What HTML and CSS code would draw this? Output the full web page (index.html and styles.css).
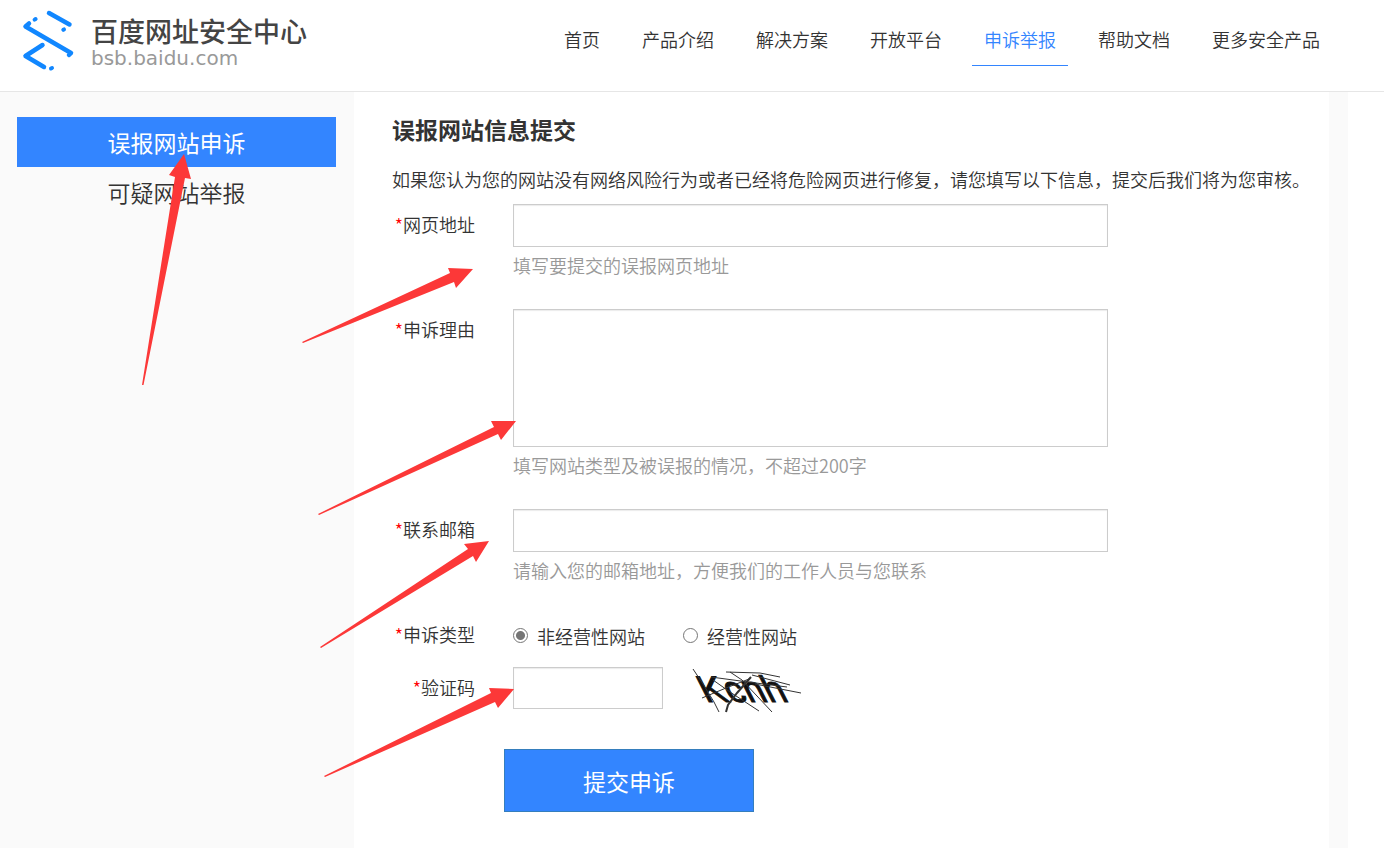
FILE: index.html
```html
<!DOCTYPE html>
<html lang="zh-CN">
<head>
<meta charset="utf-8">
<title>百度网址安全中心</title>
<link rel="stylesheet" href="styles.css">
</head>
<body>
<header class="header">
  <a class="logo" href="#">
    <svg class="logo-mark" width="56" height="64" viewBox="20 8 56 64" fill="none" stroke="#1187ff" stroke-width="4.500" stroke-linecap="round" stroke-linejoin="round" aria-hidden="true">
      <path d="M49 13 69.500 24.500"/>
      <path d="M63.300 29.800 64 29.400M34.600 19.600 35.600 19M51 68.500 52 68" stroke-width="4"/>
      <path d="M29 23.500 25.500 26.500 71 53 69 55"/>
      <path d="M42.500 45 25.500 56 44 67"/>
    </svg>
    <span class="logo-text">
      <span class="logo-name">百度网址安全中心</span>
      <span class="logo-domain">bsb.baidu.com</span>
    </span>
  </a>
  <nav class="nav">
    <a href="#">首页</a>
    <a href="#">产品介绍</a>
    <a href="#">解决方案</a>
    <a href="#">开放平台</a>
    <a class="active" href="#">申诉举报</a>
    <a href="#">帮助文档</a>
    <a href="#">更多安全产品</a>
  </nav>
</header>
<div class="page">
  <aside class="sidebar">
    <a class="active" href="#">误报网站申诉</a>
    <a href="#">可疑网站举报</a>
  </aside>
  <main class="content">
    <h1>误报网站信息提交</h1>
    <p class="intro">如果您认为您的网站没有网络风险行为或者已经将危险网页进行修复，请您填写以下信息，提交后我们将为您审核。</p>
    <form>
      <div class="row">
        <label for="url"><i>*</i>网页地址</label>
        <div class="field">
          <input class="box" id="url" type="text">
          <p class="hint">填写要提交的误报网页地址</p>
        </div>
      </div>
      <div class="row">
        <label for="reason"><i>*</i>申诉理由</label>
        <div class="field">
          <textarea class="box" id="reason"></textarea>
          <p class="hint">填写网站类型及被误报的情况，不超过200字</p>
        </div>
      </div>
      <div class="row">
        <label for="email"><i>*</i>联系邮箱</label>
        <div class="field">
          <input class="box" id="email" type="email">
          <p class="hint">请输入您的邮箱地址，方便我们的工作人员与您联系</p>
        </div>
      </div>
      <div class="row compact" role="radiogroup" aria-labelledby="kind">
        <span class="label" id="kind"><i>*</i>申诉类型</span>
        <div class="choices">
          <label><input type="radio" name="kind" checked>非经营性网站</label>
          <label><input type="radio" name="kind">经营性网站</label>
        </div>
      </div>
      <div class="row compact">
        <label for="code"><i>*</i>验证码</label>
        <div class="captcha">
          <input class="box" id="code" type="text">
          <svg width="120" height="46" viewBox="690 667 120 46" role="img" aria-label="验证码图片">
            <text class="captcha-text" transform="translate(706 702) skewX(27)">Kcnh</text>
            <g fill="none" stroke="#333" stroke-width="1">
              <path d="M693 669 703 684 714 702 719 712M711 677 748 682 787 687"/>
              <path d="M726 672 760 673 780 677M730 672 742 680 772 712"/>
              <path d="M702 698 726 688 749 679M713 680 730 692 759 711"/>
              <path d="M751 677 737 693 728 705 726 712" stroke-width="2"/>
              <path d="M752 675 790 685M755 684 801 693"/>
            </g>
          </svg>
        </div>
      </div>
      <button class="submit" type="submit">提交申诉</button>
    </form>
  </main>
</div>
<svg class="arrows" width="1384" height="848" viewBox="0 0 1384 848" fill="#fc3838" aria-hidden="true">
  <path d="M184 154 191 179 185 178 143.500 385 142 385 175 177 169 175Z"/>
  <path d="M473 269 456 288 454 282 303 343 302 342 450 273 448 268Z"/>
  <path d="M516 421 501 440 498 434 319 515 318 514 494 427 491 421Z"/>
  <path d="M489 541 476 562 473 556 321 648 320 647 468 549 464 544Z"/>
  <path d="M514 689 498 708 495 702 325 777 324 776 491 693 489 688Z"/>
</svg>
</body>
</html>
```
FILE: styles.css
```css
* {
  box-sizing: border-box;
}

body {
  position: relative;
  margin: 0;
  min-height: 100vh;
  display: flex;
  flex-direction: column;
  overflow-x: hidden;
  background: #fff;
  color: #333;
  font-family: "Noto Sans CJK SC", sans-serif;
  font-size: 18px;
  font-weight: 350;
}

a {
  color: inherit;
  text-decoration: none;
}

.header {
  height: 92px;
  flex: none;
  display: flex;
  justify-content: space-between;
  padding: 0 52px 0 20px;
  border-bottom: 1px solid #e6e6e6;
}

.logo {
  display: flex;
  gap: 15px;
  padding-top: 8px;
}

.logo-text {
  display: flex;
  flex-direction: column;
  padding-top: 8px;
}

.logo-name {
  color: #444;
  font-size: 27px;
  font-weight: 500;
  line-height: 30px;
}

.logo-domain {
  color: #999;
  font-family: "DejaVu Sans", sans-serif;
  font-size: 20px;
  font-weight: 400;
  line-height: 24px;
}

.nav {
  display: flex;
  align-items: flex-start;
  gap: 18px;
  padding-top: 14px;
}

.nav a {
  padding: 0 12px;
  line-height: 51px;
  border-bottom: 1px solid transparent;
  white-space: nowrap;
}

.nav .active {
  color: #3385ff;
  border-color: #3385ff;
}

.page {
  flex: 1;
  display: flex;
  margin-right: 36px;
  padding-right: 19px;
  background: #fafafa;
}

.sidebar {
  flex: 0 0 354px;
  padding: 25px 18px 0 17px;
}

.sidebar a {
  display: block;
  font-size: 23px;
  line-height: 50px;
  text-align: center;
}

.sidebar .active {
  background: #3385ff;
  color: #fff;
  font-weight: 400;
}

.content {
  flex: 1;
  min-width: 0;
  padding: 20px 0 36px 38px;
  background: #fff;
}

h1 {
  margin: 0;
  font-size: 23px;
  font-weight: 700;
  line-height: 34px;
}

.intro {
  margin: 14px 0 6px;
  line-height: 38px;
}

.row {
  display: grid;
  grid-template-columns: 83px minmax(0, 595px);
  column-gap: 38px;
  margin-bottom: 26px;
}

.row > label,
.label {
  line-height: 41px;
  text-align: right;
  white-space: nowrap;
}

.row i {
  color: #f00;
  font-style: normal;
}

.box {
  display: block;
  width: 100%;
  height: 43px;
  margin: 0;
  padding: 6px 12px;
  border: 1px solid #ccc;
  border-radius: 0;
  box-shadow: inset 0 1px 1px rgba(0, 0, 0, 0.08);
  background: #fff;
  color: inherit;
  font: inherit;
}

textarea.box {
  height: 138px;
  resize: none;
}

.hint {
  margin: 0;
  color: #999;
  line-height: 36px;
}

.compact {
  min-height: 43px;
  margin-bottom: 10px;
}

.choices {
  display: flex;
  align-items: center;
  gap: 38px;
}

.choices label {
  display: flex;
  align-items: center;
  gap: 9px;
}

.choices input {
  appearance: none;
  width: 15px;
  height: 15px;
  margin: 0;
  border: 1px solid #767676;
  border-radius: 50%;
  background: #fff;
}

.choices input:checked {
  background: radial-gradient(circle, #767676 4px, #fff 5px);
}

.captcha {
  display: flex;
  gap: 27px;
}

.captcha .box {
  width: 150px;
  height: 42px;
}

.captcha svg {
  overflow: visible;
}

.captcha-text {
  fill: #111;
  stroke: #111;
  stroke-width: 1px;
  font-family: "Liberation Sans", sans-serif;
  font-size: 37px;
  font-weight: 400;
}

.submit {
  display: block;
  width: 250px;
  height: 63px;
  margin: 36px 0 0 112px;
  border: 1px solid #357ebd;
  background: #3385ff;
  color: #fff;
  font-family: inherit;
  font-size: 23px;
  font-weight: 400;
}

.arrows {
  position: absolute;
  top: 0;
  left: 0;
  pointer-events: none;
}
```
